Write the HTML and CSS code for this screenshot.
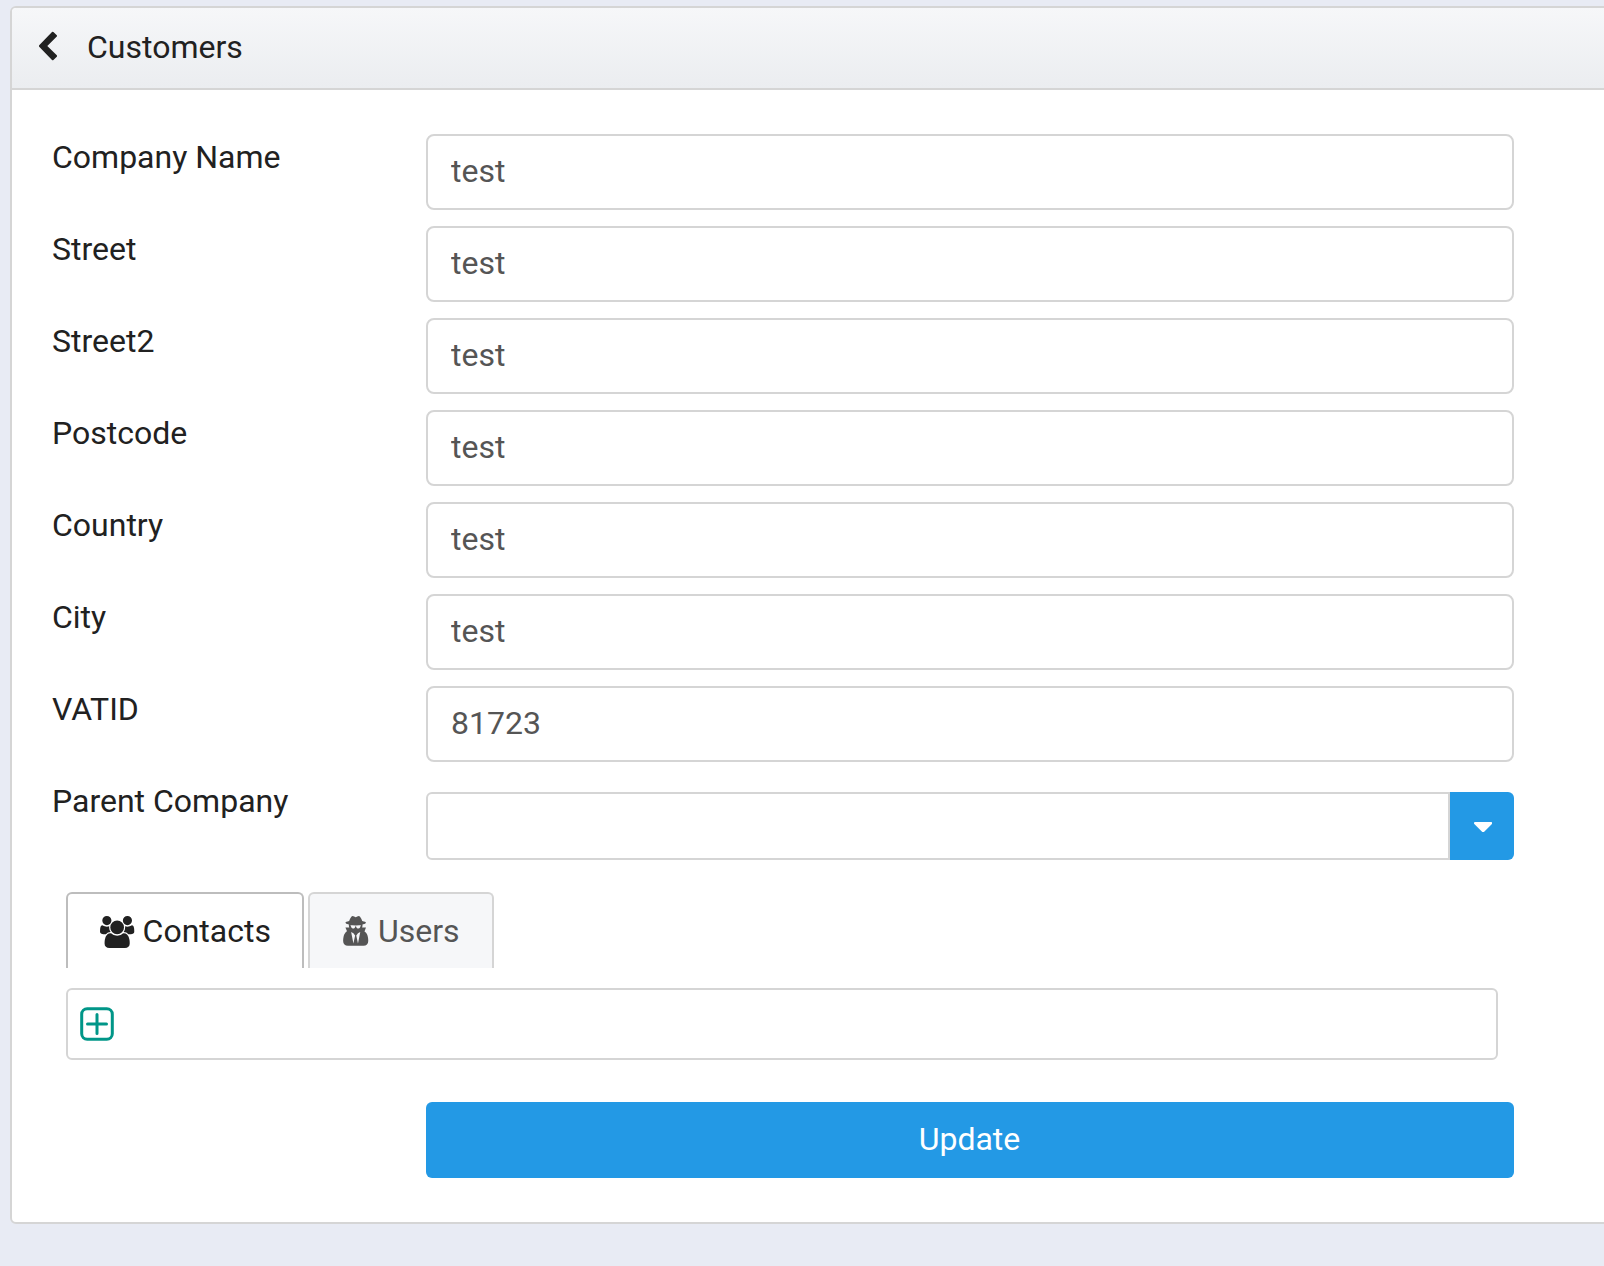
FILE: index.html
```html
<!DOCTYPE html>
<html lang="en">
<head>
<meta charset="utf-8">
<title>Customers</title>
<link rel="stylesheet" href="styles.css">
</head>
<body>
<main class="panel">
  <header class="panel-header">
    <svg class="back-icon" viewBox="0 0 20 30"><path d="M15.400 1L18.800 4.200Q19.500 4.900 18.800 5.600L9.300 15L18.800 24.300Q19.500 25 18.800 25.700L15.400 29Q14.700 29.600 14 29L1.200 15.800Q.5 15 1.200 14.200L14 1Q14.700.4 15.400 1z"/></svg>
    <h1 class="panel-title">Customers</h1>
  </header>
  <form class="panel-body">
    <div class="row"><label class="label">Company Name</label><input class="field" value="test"></div>
    <div class="row"><label class="label">Street</label><input class="field" value="test"></div>
    <div class="row"><label class="label">Street2</label><input class="field" value="test"></div>
    <div class="row"><label class="label">Postcode</label><input class="field" value="test"></div>
    <div class="row"><label class="label">Country</label><input class="field" value="test"></div>
    <div class="row"><label class="label">City</label><input class="field" value="test"></div>
    <div class="row"><label class="label">VATID</label><input class="field" value="81723"></div>
    <div class="row">
      <label class="label">Parent Company</label>
      <div class="combo">
        <input class="combo-input" value="">
        <button class="combo-button" type="button" aria-label="Open">
          <svg class="caret-icon" viewBox="0 640 1024 576"><path d="M1024 704q0 26-19 45l-448 448q-19 19-45 19t-45-19l-448-448q-19-19-19-45t19-45 45-19h896q26 0 45 19t19 45z"/></svg>
        </button>
      </div>
    </div>
    <div class="tabs">
      <div class="tab tab-active">
        <svg class="users-icon" viewBox="0 0 1920 1792"><path d="M593 896q-162 5-265 128h-134q-82 0-138-40.500t-56-118.500q0-353 124-353 6 0 43.500 21t97.500 42.500 119 21.500q67 0 133-23-5 37-5 66 0 139 81 256zm1071 637q0 120-73 189.500t-194 69.500h-874q-121 0-194-69.500t-73-189.500q0-53 3.500-103.500t14-109 26.500-108.500 43-97.500 62-81 85.500-53.500 111.500-20q10 0 43 21.500t73 48 107 48 135 21.500 135-21.500 107-48 73-48 43-21.500q61 0 111.500 20t85.500 53.500 62 81 43 97.500 26.500 108.500 14 109 3.500 103.500zm-1024-1277q0 106-75 181t-181 75-181-75-75-181 75-181 181-75 181 75 75 181zm704 384q0 159-112.500 271.500t-271.500 112.500-271.500-112.500-112.500-271.500 112.500-271.500 271.500-112.500 271.500 112.500 112.500 271.500zm576 225q0 78-56 118.500t-138 40.500h-134q-103-123-265-128 81-117 81-256 0-29-5-66 66 23 133 23 59 0 119-21.500t97.500-42.500 43.500-21q124 0 124 353zm-128-609q0 106-75 181t-181 75-181-75-75-181 75-181 181-75 181 75 75 181z"/></svg>
        <span>Contacts</span>
      </div>
      <div class="tab">
        <svg class="secret-icon" viewBox="-64 0 1536 1792"><path d="M576 1536l96-448-96-128-128-64zm256 0l128-640-128 64-96 128zm160-1010q-2-4-4-6-10-8-96-8-70 0-167 19-7 2-21 2t-21-2q-97-19-167-19-86 0-96 8-2 2-4 6 2 18 4 27 2 3 7.500 6.500t7.500 10.500q2 4 7.500 20.500t7 20.500 7.500 17 8.500 17 9 14 12 13.500 14 9.500 17.500 8 20.500 4 24.500 2q36 0 59-12.500t32.500-30 14.500-34.500 11.500-29.500 17.500-12.500h12q11 0 17.500 12.500t11.500 29.500 14.500 34.500 32.500 30 59 12.500q13 0 24.500-2t20.500-4 17.500-8 14-9.500 12-13.500 9-14 8.500-17 7.500-17 7-20.500 7.500-20.500q2-7 7.500-10.500t7.500-6.500q2-9 4-27zm416 879q0 121-73 190t-194 69h-874q-121 0-194-69t-73-190q0-61 4.500-118t19-125.500 37.500-123.500 63.500-103.500 93.500-74.500l-90-220h214q-22-64-22-128 0-12 2-32-194-40-194-96 0-57 210-99 17-62 51.500-134t70.500-114q32-37 76-37 30 0 84 31t84 31 84-31 84-31q44 0 76 37 36 42 70.500 114t51.500 134q210 42 210 99 0 56-194 96 7 81-20 160h214l-82 225q63 33 107.500 96.500t65.500 143.500 29 151.500 8.500 148.500z"/></svg>
        <span>Users</span>
      </div>
    </div>
    <div class="toolbar">
      <svg class="add-icon" viewBox="0 0 34 34"><rect x="1.700" y="1.700" width="30.600" height="30.600" rx="5.500"/><path d="M17 7.500v19M7.500 17h19"/></svg>
    </div>
    <button class="update" type="button">Update</button>
  </form>
</main>
</body>
</html>
```
FILE: styles.css
```css
* { box-sizing: border-box; }

body {
  margin: 0;
  padding: 6px 0 0 10px;
  height: 1266px;
  overflow: hidden;
  background: #e8ebf4;
  color: #212121;
  font: 32px/38px Roboto, sans-serif;
}

input, button { font: inherit; margin: 0; }

.panel {
  width: 1640px;
  height: 1218px;
  border: 2px solid #d5d5d5;
  border-radius: 6px;
  background: #fff;
  overflow: hidden;
}

.panel-header {
  display: flex;
  align-items: center;
  height: 82px;
  padding: 0 0 2px 26px;
  border-bottom: 2px solid #d5d5d5;
  background: linear-gradient(#f6f7f9, #ebedf0);
}

.back-icon {
  width: 20px;
  height: 30px;
  margin: -3px 29px 0 0;
  fill: #212121;
}

.panel-title { margin: 0; font-size: 32px; font-weight: 400; }

.panel-body { width: 1502px; padding: 44px 0 0 40px; }

.row { display: flex; height: 92px; }

.label { width: 374px; padding-top: 4px; }

.field {
  width: 1088px;
  height: 76px;
  padding: 0 24px 2px 23px;
  border: 2px solid #d5d5d5;
  border-radius: 8px;
  background: #fff;
  color: #555;
}

.combo { display: flex; width: 1088px; height: 68px; margin-top: 14px; }

.combo-input {
  flex: 1;
  min-width: 0;
  border: 2px solid #d5d5d5;
  border-radius: 6px 0 0 6px;
}

.combo-button {
  display: flex;
  align-items: center;
  justify-content: center;
  width: 64px;
  padding: 2px 0 0 2px;
  border: 0;
  border-radius: 0 6px 6px 0;
  background: #2399e5;
}

.caret-icon { width: 18.300px; height: 10.300px; fill: #fff; }

.tabs { display: flex; gap: 4px; padding: 22px 0 0 14px; }

.tab {
  display: flex;
  gap: 8px;
  width: 186px;
  height: 76px;
  padding: 18px 0 0 32px;
  border: 2px solid #d5d5d5;
  border-bottom: 0;
  border-radius: 6px 6px 0 0;
  background: #f6f7f9;
  color: #555;
}

.tab-active { width: 238px; border-color: #bdbdbd; background: #fff; color: #212121; }

.users-icon, .secret-icon { flex: none; height: 32px; margin-top: 4px; fill: currentColor; }
.users-icon { width: 34.300px; margin-left: 0.250px; }
.secret-icon { width: 27.400px; margin-right: 0.600px; }

.toolbar {
  display: flex;
  align-items: center;
  width: 1432px;
  height: 72px;
  margin: 20px 0 42px 14px;
  padding-left: 12px;
  border: 2px solid #d5d5d5;
  border-radius: 6px;
}

.add-icon { width: 34px; height: 34px; margin-top: -1px; fill: none; stroke: #009688; stroke-width: 3; stroke-linecap: round; }

.update {
  display: block;
  width: 1088px;
  height: 76px;
  margin-left: 374px;
  padding: 0 1px 2px 0;
  border: 0;
  border-radius: 6px;
  background: #2399e5;
  color: #fff;
}
```
